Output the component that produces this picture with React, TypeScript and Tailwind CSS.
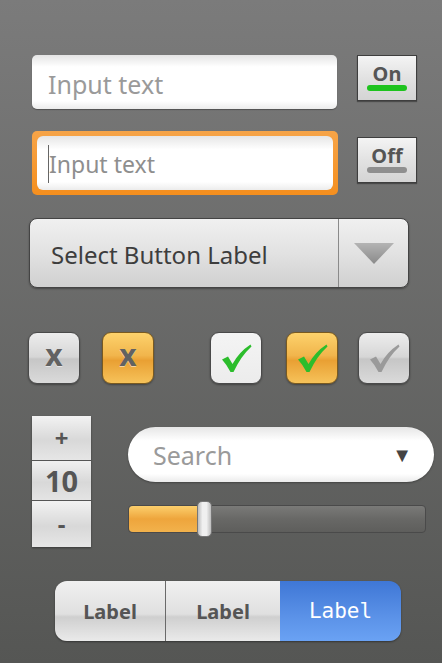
import React from 'react';

const font = { fontFamily: '"Noto Sans", "Open Sans", sans-serif' };

function Check({ color }: { color: string }) {
  return (
    <svg width="32" height="30" viewBox="0 0 32 30">
      <path
        d="M2 16.5 L8 13.5 L12.5 21 Q19 9 30.5 1.5 L31.5 3.5 Q21 13 13.5 29 L10.5 29 Q7 22 2 16.5 Z"
        fill={color}
      />
    </svg>
  );
}

function Toggle({ label, on }: { label: string; on: boolean }) {
  return (
    <div className="w-[60px] h-[46px] flex flex-col items-center justify-center border border-[#3e3e3e] bg-[linear-gradient(to_bottom,#f4f4f4,#e2e2e2_50%,#d4d4d4)] shadow-[0_1px_1px_rgba(0,0,0,0.35)]">
      <span className="text-[20px] leading-[22px] font-bold text-[#555] -mt-[3px]">{label}</span>
      <div
        className={`w-[40px] h-[6px] rounded-full ${on ? 'bg-[#1ec31e]' : 'bg-[#8f8f8f]'}`}
      />
    </div>
  );
}

function Box({ kind, children }: { kind: 'gray' | 'orange' | 'white'; children: React.ReactNode }) {
  const bg =
    kind === 'orange'
      ? 'bg-[linear-gradient(to_bottom,#fdd26c,#f1b54c_45%,#e9a033_55%,#f6c25a)] border-[#7a5a20]'
      : kind === 'white'
        ? 'bg-[linear-gradient(to_bottom,#f4f4f4,#ececec)] border-[#4a4a4a]'
        : 'bg-[linear-gradient(to_bottom,#ededed,#d6d6d6_48%,#c6c6c6_52%,#dadada)] border-[#4a4a4a]';
  return (
    <div
      className={`w-[52px] h-[52px] rounded-[9px] border flex items-center justify-center shadow-[0_1px_2px_rgba(0,0,0,0.35)] ${bg}`}
    >
      {children}
    </div>
  );
}

function X() {
  return (
    <span className="text-[30px] leading-none font-bold text-[#626262] -mt-[6px] [text-shadow:0_1px_0_rgba(255,255,255,0.5)]">
      x
    </span>
  );
}

export default function App() {
  return (
    <div
      className="w-[442px] h-[663px] flex flex-col bg-[linear-gradient(to_bottom,#7b7b7b,#555654)]"
      style={font}
    >
      {/* text fields and toggles */}
      <div className="flex items-start mt-[55px] ml-[32px]">
        <div className="w-[305px] h-[54px] rounded-[5px] bg-[linear-gradient(to_bottom,#e4e4e4,#ffffff_22%,#ffffff_85%,#ececec)] shadow-[0_1px_1px_rgba(0,0,0,0.3)] flex items-center pl-[16px]">
          <span className="text-[25px] text-[#9a9a9a] mt-[5px]">Input text</span>
        </div>
        <div className="ml-[20px]">
          <Toggle label="On" on />
        </div>
      </div>

      <div className="flex items-start mt-[22px] ml-[32px]">
        <div className="w-[306px] h-[64px] rounded-[5px] bg-[linear-gradient(to_bottom,#f6a448,#f58f1e)] p-[5px]">
          <div className="w-full h-full rounded-[6px] bg-[linear-gradient(to_bottom,#e6e6e6,#ffffff_25%,#ffffff_85%,#ececec)] flex items-center pl-[11px]">
            <div className="w-[1px] h-[38px] bg-[#666] mt-[2px]" />
            <span className="text-[23px] text-[#8e8e8e] mt-[3px]">Input text</span>
          </div>
        </div>
        <div className="ml-[19px] mt-[6px]">
          <Toggle label="Off" on={false} />
        </div>
      </div>

      {/* select */}
      <div className="mt-[23px] ml-[29px] w-[380px] h-[70px] rounded-[8px] border border-[#444] bg-[linear-gradient(to_bottom,#f0f0f0,#e2e2e2_50%,#d0d0d0)] shadow-[0_1px_2px_rgba(0,0,0,0.35)] flex">
        <div className="flex-1 flex items-center pl-[21px] border-r border-[#8a8a8a]">
          <span className="text-[24px] text-[#3d3d3d] mt-[4px]">Select Button Label</span>
        </div>
        <div className="w-[69px] flex items-center justify-center">
          <svg width="40" height="21" viewBox="0 0 40 21">
            <defs>
              <linearGradient id="tri" x1="0" y1="0" x2="0" y2="1">
                <stop offset="0" stopColor="#b4b4b4" />
                <stop offset="1" stopColor="#8a8a8a" />
              </linearGradient>
            </defs>
            <path d="M0 0 H40 L20 21 Z" fill="url(#tri)" />
          </svg>
        </div>
      </div>

      {/* checkboxes */}
      <div className="flex mt-[44px] ml-[28px]">
        <Box kind="gray">
          <X />
        </Box>
        <div className="ml-[22px]">
          <Box kind="orange">
            <X />
          </Box>
        </div>
        <div className="ml-[56px]">
          <Box kind="white">
            <Check color="#2cbd2c" />
          </Box>
        </div>
        <div className="ml-[24px]">
          <Box kind="orange">
            <Check color="#2cbd2c" />
          </Box>
        </div>
        <div className="ml-[20px]">
          <Box kind="gray">
            <Check color="#9a9a9a" />
          </Box>
        </div>
      </div>

      {/* stepper, search, slider */}
      <div className="flex mt-[32px] ml-[32px]">
        <div className="w-[59px] flex flex-col shadow-[0_1px_2px_rgba(0,0,0,0.4)] bg-[#e8e8e8]">
          <div className="h-[45px] flex items-center justify-center bg-[linear-gradient(to_bottom,#f2f2f2,#d8d8d8_55%,#e6e6e6)] border-b border-[#555]">
            <span className="text-[24px] font-bold text-[#555] leading-none">+</span>
          </div>
          <div className="h-[40px] flex items-center justify-center bg-[linear-gradient(to_bottom,#f0f0f0,#d8d8d8_55%,#e4e4e4)] border-b border-[#555]">
            <span className="text-[29px] font-bold text-[#555] leading-none">10</span>
          </div>
          <div className="h-[46px] flex items-center justify-center bg-[linear-gradient(to_bottom,#f2f2f2,#d8d8d8_55%,#e6e6e6)]">
            <span className="text-[24px] font-bold text-[#555] leading-none">-</span>
          </div>
        </div>

        <div className="ml-[37px] flex flex-col">
          <div className="mt-[11px] w-[306px] h-[55px] rounded-full bg-[linear-gradient(to_bottom,#e6e6e6,#ffffff_25%,#ffffff_85%,#ebebeb)] shadow-[0_1px_2px_rgba(0,0,0,0.3)] flex items-center pl-[25px] pr-[22px]">
            <span className="flex-1 text-[25px] text-[#9a9a9a] mt-[3px]">Search</span>
            <span className="text-[20px] text-[#444]">▼</span>
          </div>
          <div className="mt-[23px] relative w-[298px] h-[28px] rounded-[4px] border border-[#4a4a4a] bg-[linear-gradient(to_bottom,#7a7a78,#686866_50%,#5e5e5c)] flex">
            <div className="w-[74px] h-full rounded-l-[4px] bg-[linear-gradient(to_bottom,#fccf6c,#eea53c_50%,#f2b24c)]" />
            <div className="absolute left-[68px] -top-[5px] w-[15px] h-[36px] rounded-[5px] border border-[#777] bg-[linear-gradient(to_right,#bdbdbd,#f0f0f0_35%,#f0f0f0_65%,#bdbdbd)]" />
          </div>
        </div>
      </div>

      {/* segmented control */}
      <div className="mt-[34px] ml-[55px] w-[346px] h-[60px] rounded-[12px] flex overflow-hidden shadow-[0_1px_2px_rgba(0,0,0,0.4)]">
        <div className="w-[111px] flex items-center justify-center bg-[linear-gradient(to_bottom,#f0f0f0,#e0e0e0_55%,#cfcfcf_60%,#eaeaea)] border-r border-[#6a6a6a]">
          <span className="text-[20px] font-bold text-[#555] mt-[2px]">Label</span>
        </div>
        <div className="w-[114px] flex items-center justify-center bg-[linear-gradient(to_bottom,#f0f0f0,#e0e0e0_55%,#cfcfcf_60%,#eaeaea)]">
          <span className="text-[20px] font-bold text-[#555] mt-[2px]">Label</span>
        </div>
        <div className="flex-1 flex items-center justify-center bg-[linear-gradient(to_bottom,#3f77d6,#5b92e8_60%,#6aa2f4)]">
          <span className="text-[21px] text-white mt-[1px]" style={{ fontFamily: '"DejaVu Sans Mono", "Liberation Mono", monospace' }}>
            Label
          </span>
        </div>
      </div>
    </div>
  );
}
